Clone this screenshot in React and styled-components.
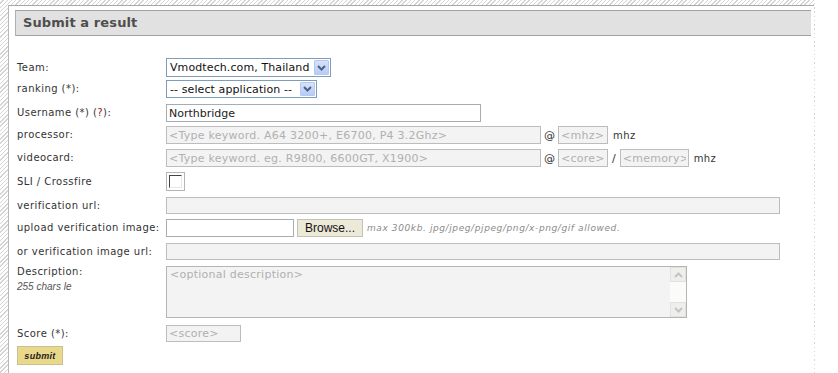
import React from "react";
import styled, { createGlobalStyle } from "styled-components";

const Global = createGlobalStyle`
  html, body { margin: 0; padding: 0; }
  body {
    background-color: #fff;
    background-image: repeating-linear-gradient(135deg, #ffffff 0 2px, #d4d4d4 2px 3px);
    background-size: 815px 100%;
    background-repeat: no-repeat;
    font-family: "DejaVu Sans", Verdana, sans-serif;
    color: #333;
  }
`;

const Panel = styled.div`
  margin: 5px 0 0 8px;
  width: 806px;
  min-height: 368px;
  background: #fff;
  border-top: 1px solid #a8a8a8;
  border-left: 1px solid #b8b8b8;
  padding: 4px 0 0 6px;
  box-sizing: border-box;
`;

const Header = styled.div`
  height: 26px;
  box-sizing: border-box;
  margin-right: 3px;
  background: #e1e1e1;
  border-top: 1px solid #a0a0a0;
  border-bottom: 1px solid #a0a0a0;
  border-left: 1px solid #b0b0b0;
  padding-left: 7px;
  font-size: 13px;
  font-weight: bold;
  line-height: 24px;
  color: #4f4f4f;
  letter-spacing: 0.1px;
`;

const Form = styled.div`
  margin-top: 22px;
  padding-left: 2px;
  display: flex;
  flex-direction: column;
`;

const Row = styled.div`
  display: grid;
  grid-template-columns: 149px 1fr;
  height: ${(p) => p.$h}px;
  align-items: start;
`;

const Label = styled.div`
  font-size: 10px;
  line-height: ${(p) => p.$lh || 18}px;
  color: #333;
  white-space: nowrap;
  letter-spacing: 0.45px;
`;

const Help = styled.span`
  color: #8b1a1a;
`;

const Note = styled.div`
  font-family: "Liberation Sans", Arial, sans-serif;
  font-style: italic;
  font-size: 10px;
  color: #555;
  margin-top: 3px;
`;

const Field = styled.div`
  display: flex;
  align-items: center;
  gap: ${(p) => p.$gap ?? 4}px;
  font-size: 10px;
  color: #333;
`;

const Input = styled.input`
  box-sizing: border-box;
  width: ${(p) => p.$w}px;
  height: ${(p) => p.$h || 18}px;
  margin: 0;
  padding: 0 2px;
  font-family: "DejaVu Sans", Verdana, sans-serif;
  font-size: 11px;
  color: #222;
  background: ${(p) => (p.$white ? "#fff" : "#f3f3f3")};
  border: 1px solid ${(p) => (p.$white ? "#a5acb2" : "#bdbdbd")};
  outline: none;
  &::placeholder { color: #b0b0b0; opacity: 1; letter-spacing: 0.25px; }
`;

const SelectBox = styled.div`
  box-sizing: border-box;
  width: ${(p) => p.$w}px;
  height: ${(p) => p.$h}px;
  border: 1px solid #7f9db9;
  background: #fff;
  display: flex;
  align-items: center;
  padding: 1px;
  font-size: 11px;
  color: #111;
  letter-spacing: 0.1px;
`;

const SelectText = styled.span`
  flex: 1;
  padding-left: 2px;
  white-space: nowrap;
  overflow: hidden;
`;

const ArrowBtn = styled.span`
  width: 15px;
  align-self: stretch;
  background: linear-gradient(#d6e2fb, #b7cbf6);
  border: 1px solid #b4c8f1;
  box-sizing: border-box;
  display: flex;
  align-items: center;
  justify-content: center;
  border-radius: 1px;
`;

const Sep = styled.span`
  font-size: 11px;
  color: #333;
  margin: 0 ${(p) => p.$m ?? 2}px;
`;

const Unit = styled.span`
  font-size: 10px;
  color: #333;
  margin-left: 5px;
  letter-spacing: 0.4px;
`;

const Check = styled.div`
  box-sizing: border-box;
  width: 19px;
  height: 19px;
  border: 1px solid #b5b5b5;
  background: #fff;
`;

const CheckInner = styled.div`
  margin: 2px;
  width: 13px;
  height: 13px;
  border-top: 1px solid #444;
  border-left: 1px solid #444;
  border-right: 1px solid #e8e8e8;
  border-bottom: 1px solid #e8e8e8;
  box-sizing: border-box;
`;

const BrowseBtn = styled.button`
  box-sizing: border-box;
  width: 66px;
  height: 18px;
  margin: 0 0 0 1px;
  padding: 0;
  background: #ece9d8;
  border: 1px solid #c4c2b4;
  font-family: "Liberation Sans", Arial, sans-serif;
  font-size: 12px;
  color: #111;
`;

const Hint = styled.span`
  font-style: italic;
  font-size: 9px;
  color: #8a8a8a;
  margin-left: 2px;
  letter-spacing: 0.6px;
`;

const AreaWrap = styled.div`
  box-sizing: border-box;
  width: 521px;
  height: 52px;
  border: 1px solid #b5b5b5;
  background: #f3f3f3;
  display: flex;
`;

const Area = styled.div`
  flex: 1;
  padding: 1px 3px;
  font-size: 11px;
  color: #b0b0b0;
  letter-spacing: 0.25px;
`;

const Scroll = styled.div`
  width: 16px;
  background: #fbfbf9;
  display: flex;
  flex-direction: column;
  justify-content: space-between;
`;

const ScrollBtn = styled.div`
  height: 15px;
  background: #eeeeea;
  border: 1px solid #e2e2dd;
  box-sizing: border-box;
  display: flex;
  align-items: center;
  justify-content: center;
`;

const SubmitRow = styled.div`
  display: flex;
`;

const Submit = styled.button`
  box-sizing: border-box;
  width: 46px;
  height: 19px;
  margin: 0;
  padding: 0;
  background: #ead98b;
  border: 1px solid #c9bf93;
  font-family: "Liberation Sans", Arial, sans-serif;
  font-style: italic;
  font-weight: bold;
  font-size: 9px;
  color: #222;
  letter-spacing: 0.3px;
`;

const Chevron = ({ up, color = "#4d6185" }) => (
  <svg width="9" height="6" viewBox="0 0 9 6">
    <path
      d={up ? "M1 5 L4.5 1.5 L8 5" : "M1 1 L4.5 4.5 L8 1"}
      fill="none"
      stroke={color}
      strokeWidth="2"
    />
  </svg>
);

const Select = ({ w, h, children }) => (
  <SelectBox $w={w} $h={h}>
    <SelectText>{children}</SelectText>
    <ArrowBtn>
      <Chevron />
    </ArrowBtn>
  </SelectBox>
);

export default function App() {
  return (
    <>
      <Global />
      <Panel>
        <Header>Submit a result</Header>
        <Form>
          <Row $h={22}>
            <Label $lh={19}>Team:</Label>
            <Field>
              <Select w={165} h={19}>Vmodtech.com, Thailand</Select>
            </Field>
          </Row>
          <Row $h={24}>
            <Label $lh={18}>ranking (*):</Label>
            <Field>
              <Select w={151} h={18}>-- select application --</Select>
            </Field>
          </Row>
          <Row $h={22}>
            <Label $lh={18}>
              Username (*) (<Help>?</Help>):
            </Label>
            <Field>
              <Input $w={315} $white defaultValue="Northbridge" />
            </Field>
          </Row>
          <Row $h={23}>
            <Label $lh={18}>processor:</Label>
            <Field $gap={0}>
              <Input $w={375} placeholder="<Type keyword. A64 3200+, E6700, P4 3.2Ghz>" />
              <Sep $m={3}>@</Sep>
              <Input $w={50} placeholder="<mhz>" />
              <Unit>mhz</Unit>
            </Field>
          </Row>
          <Row $h={23}>
            <Label $lh={18}>videocard:</Label>
            <Field $gap={0}>
              <Input $w={375} placeholder="<Type keyword. eg. R9800, 6600GT, X1900>" />
              <Sep $m={3}>@</Sep>
              <Input $w={50} placeholder="<core>" />
              <Sep $m={4}>/</Sep>
              <Input $w={69} placeholder="<memory>" />
              <Unit>mhz</Unit>
            </Field>
          </Row>
          <Row $h={25}>
            <Label $lh={19}>SLI / Crossfire</Label>
            <Field>
              <Check>
                <CheckInner />
              </Check>
            </Field>
          </Row>
          <Row $h={22}>
            <Label $lh={17}>verification url:</Label>
            <Field>
              <Input $w={614} $h={17} />
            </Field>
          </Row>
          <Row $h={24}>
            <Label $lh={18}>upload verification image:</Label>
            <Field $gap={2}>
              <Input $w={128} $white />
              <BrowseBtn>Browse...</BrowseBtn>
              <Hint>max 300kb. jpg/jpeg/pjpeg/png/x-png/gif allowed.</Hint>
            </Field>
          </Row>
          <Row $h={23}>
            <Label $lh={17}>or verification image url:</Label>
            <Field>
              <Input $w={614} $h={17} />
            </Field>
          </Row>
          <Row $h={59}>
            <div>
              <Label $lh={12}>Description:</Label>
              <Note>255 chars le</Note>
            </div>
            <Field>
              <AreaWrap>
                <Area>&lt;optional description&gt;</Area>
                <Scroll>
                  <ScrollBtn>
                    <Chevron up color="#c4c4c0" />
                  </ScrollBtn>
                  <ScrollBtn>
                    <Chevron color="#c4c4c0" />
                  </ScrollBtn>
                </Scroll>
              </AreaWrap>
            </Field>
          </Row>
          <Row $h={21}>
            <Label $lh={17}>Score (*):</Label>
            <Field>
              <Input $w={75} $h={17} placeholder="<score>" />
            </Field>
          </Row>
          <SubmitRow>
            <Submit>submit</Submit>
          </SubmitRow>
        </Form>
      </Panel>
    </>
  );
}
